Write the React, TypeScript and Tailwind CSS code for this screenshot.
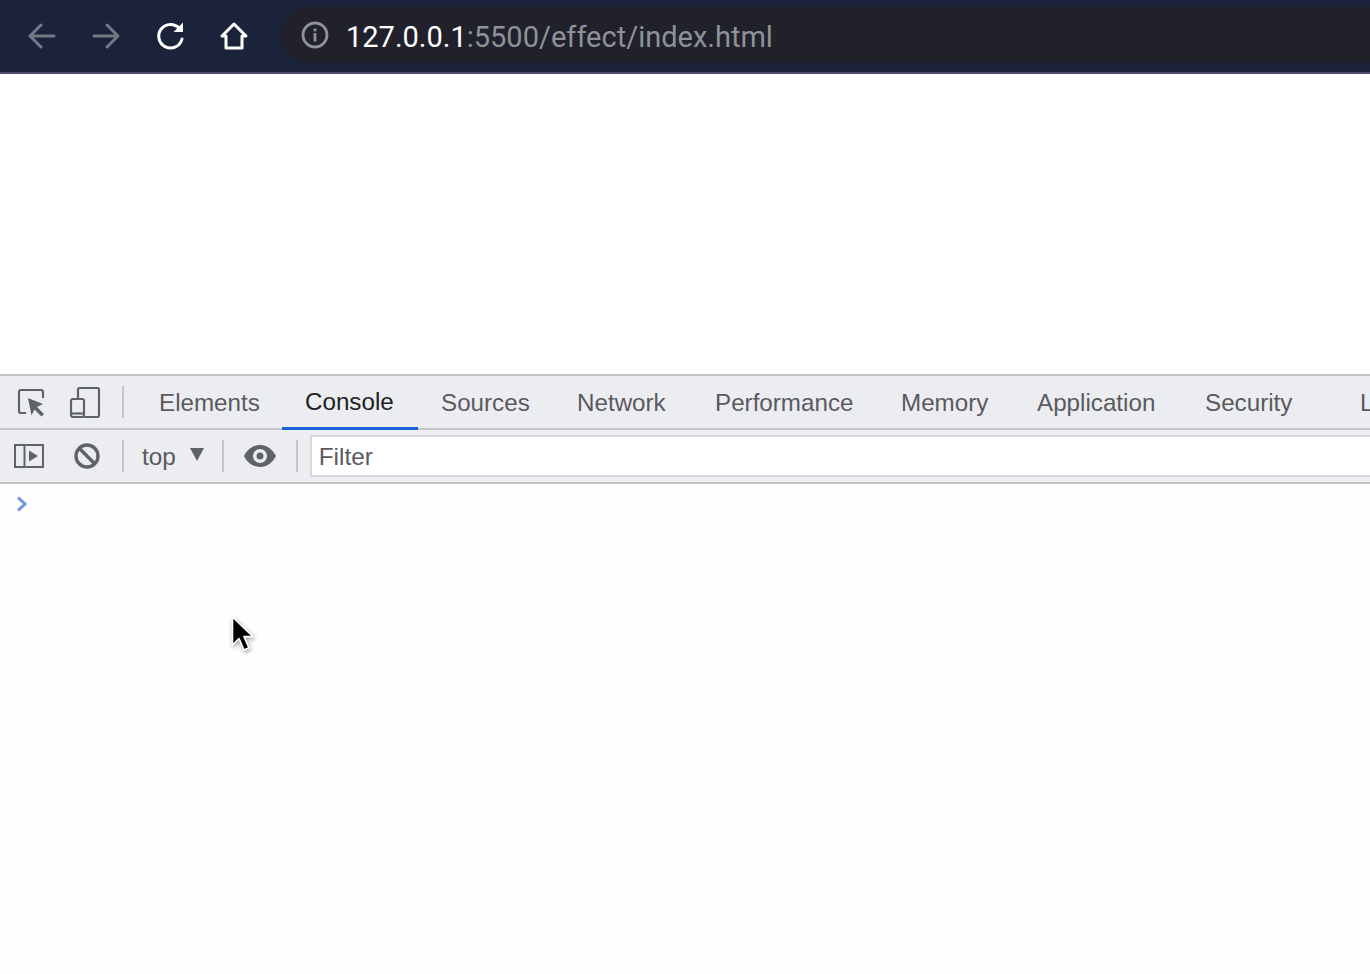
const tabs = [
  { name: "Elements", width: "w-[146px]" },
  { name: "Console", width: "w-[136px]" },
  { name: "Sources", width: "w-[136px]" },
  { name: "Network", width: "w-[138px]" },
  { name: "Performance", width: "w-[186px]" },
  { name: "Memory", width: "w-[136px]" },
  { name: "Application", width: "w-[168px]" },
  { name: "Security", width: "w-[155px]" },
  { name: "Lighthouse", width: "w-[150px]" },
];

function Divider({ className }: { className: string }) {
  return <div className={`w-[2px] h-8 bg-[#c4c5c9] shrink-0 ${className}`} />;
}

function BrowserBar() {
  return (
    <div className="h-[74px] shrink-0 bg-[#1a2339] border-b-2 border-[#4b4b72] flex items-center overflow-hidden">
      <div className="flex items-center pl-[26px] w-[280px] shrink-0">
        <svg width="32" height="32" viewBox="0 0 32 32" fill="none" stroke="#727884" strokeWidth="3" strokeLinecap="round" strokeLinejoin="round">
          <path d="M28 16H4M15 5 4 16l11 11" />
        </svg>
        <svg className="ml-[32px]" width="32" height="32" viewBox="0 0 32 32" fill="none" stroke="#727884" strokeWidth="3" strokeLinecap="round" strokeLinejoin="round">
          <path d="M4 16h24M17 5l11 11-11 11" />
        </svg>
        <svg className="ml-[33px]" width="32" height="32" viewBox="0 0 32 32" fill="none">
          <path d="M24.500 8.500A11.800 11.800 0 1 0 27 19" stroke="#fff" strokeWidth="3" strokeLinecap="round" />
          <path d="M28 2.500V12H18.500Z" fill="#fff" />
        </svg>
        <svg className="ml-[31px]" width="32" height="32" viewBox="0 0 32 32" fill="none" stroke="#fff" strokeWidth="3" strokeLinejoin="round" strokeLinecap="round">
          <path d="M4 16 16 4l12 12h-4v12H8V16Z" />
        </svg>
      </div>
      <div className="flex-1 h-[56px] -mt-[2px] bg-[#20212b] rounded-l-[28px] flex items-center pl-[20px]">
        <svg width="30" height="30" viewBox="0 0 30 30" fill="none">
          <circle cx="15" cy="15" r="12" stroke="#8f9198" strokeWidth="2.800" />
          <rect x="13.600" y="13" width="2.800" height="8.500" fill="#8f9198" />
          <rect x="13.600" y="8.500" width="2.800" height="2.800" fill="#8f9198" />
        </svg>
        <span className="ml-[16px] mt-[4px] font-['Roboto',sans-serif] text-[29px] leading-none whitespace-nowrap">
          <span className="text-white">127.0.0.1</span>
          <span className="text-[#8f9198]">:5500/effect/index.html</span>
        </span>
      </div>
    </div>
  );
}

function TabBar() {
  return (
    <div className="h-[54px] shrink-0 bg-[#ecedf1] shadow-[inset_0_-2px_0_#c4c5c9] flex items-start overflow-hidden">
      <div className="flex items-center h-[52px] pl-[16px] w-[136px] shrink-0">
        <svg width="32" height="32" viewBox="0 0 32 32" fill="none">
          <path d="M10 27H5a2 2 0 0 1-2-2V6a2 2 0 0 1 2-2h20a2 2 0 0 1 2 2v6" stroke="#5f6368" strokeWidth="2.200" />
          <path d="M12 12 27 18l-6 3 7 7-2.500 2.500-7-7-3 6Z" fill="#5f6368" />
        </svg>
        <svg className="ml-[21px]" width="32" height="32" viewBox="0 0 32 32" fill="none" stroke="#5f6368" strokeWidth="2.200">
          <path d="M9 12V3.500a1.500 1.500 0 0 1 1.500-1.500h18a1.500 1.500 0 0 1 1.500 1.500v26a1.500 1.500 0 0 1-1.500 1.500H15" />
          <rect x="2" y="13" width="13" height="18" rx="2" />
          <path d="M2 27.500h13" />
        </svg>
        <Divider className="ml-[21px] -mr-[2px]" />
      </div>
      <div className="flex font-['Liberation_Sans',sans-serif] text-[24.200px] whitespace-nowrap">
        {tabs.map((t) => (
          <div
            key={t.name}
            className={
              t.name === "Console"
                ? `${t.width} shrink-0 h-[54px] pl-[23px] pt-[1px] flex items-center text-[#202124] border-b-[3px] border-[#1a64d8]`
                : `${t.width} shrink-0 h-[52px] pl-[23px] pt-[2px] flex items-center text-[#5a5a5e]`
            }
          >
            {t.name}
          </div>
        ))}
      </div>
    </div>
  );
}

function ConsoleBar() {
  return (
    <div className="h-[54px] shrink-0 bg-[#ecedf1] border-b-2 border-[#c4c5c9] flex items-center">
      <svg className="ml-[14px] shrink-0" width="30" height="26" viewBox="0 0 30 26" fill="none" stroke="#5f6368" strokeWidth="2">
        <rect x="1" y="2" width="28" height="22" />
        <path d="M10.500 2v22" />
        <path d="M15 7.500 24 13l-9 5.500Z" fill="#5f6368" stroke="none" />
      </svg>
      <svg className="ml-[29px] shrink-0" width="28" height="28" viewBox="0 0 28 28" fill="none" stroke="#5f6368" strokeWidth="3.400">
        <circle cx="14" cy="14" r="11" />
        <path d="M6.500 6.500l15 15" />
      </svg>
      <Divider className="ml-[21px]" />
      <span className="ml-[18px] pt-[3px] font-['Liberation_Sans',sans-serif] text-[24.300px] text-[#5a5a5e]">top</span>
      <svg className="ml-[14px] -mt-[4px] shrink-0" width="14" height="13" viewBox="0 0 14 13">
        <path d="M0 0h14L7 13Z" fill="#5f6368" />
      </svg>
      <Divider className="ml-[18px]" />
      <svg className="ml-[20px] shrink-0" width="32" height="22" viewBox="0 0 32 22">
        <path fillRule="evenodd" d="M16 0C9 0 3.200 4.500 0 11c3.200 6.500 9 11 16 11s12.800-4.500 16-11C28.800 4.500 23 0 16 0Zm0 18a7 7 0 1 1 0-14 7 7 0 0 1 0 14Zm0-3.500a3.500 3.500 0 1 0 0-7 3.500 3.500 0 0 0 0 7Z" fill="#5f6368" />
      </svg>
      <Divider className="ml-[20px]" />
      <div className="ml-[12px] flex-1 h-[42px] bg-white border-2 border-r-0 border-[#d6d7da] flex items-center pl-[7px] pt-[2px] font-['Liberation_Sans',sans-serif] text-[24.300px] text-[#5a5a5e]">
        Filter
      </div>
    </div>
  );
}

export default function App() {
  return (
    <div className="relative w-[1370px] h-[974px] overflow-hidden flex flex-col bg-[#fefefe]">
      <BrowserBar />
      <div className="h-[302px] shrink-0 bg-white border-b-2 border-[#c4c5c9]" />
      <TabBar />
      <ConsoleBar />
      <div className="pl-[16px] pt-[12px]">
        <svg width="12" height="16" viewBox="0 0 12 16" fill="none" stroke="#6d96e4" strokeWidth="3">
          <path d="M2 1.500 9 8l-7 6.500" />
        </svg>
      </div>
      <svg className="absolute left-[226px] top-[611px]" width="32" height="46" viewBox="0 0 32 46" style={{ filter: "drop-shadow(1px 2px 2px rgba(0,0,0,0.35))" }}>
        <path d="M6.500 6V34l6.500-6.500 5 11.500 5-2.200-5-11.200H27Z" fill="#000" stroke="#fff" strokeWidth="1.600" strokeLinejoin="round" />
      </svg>
    </div>
  );
}
